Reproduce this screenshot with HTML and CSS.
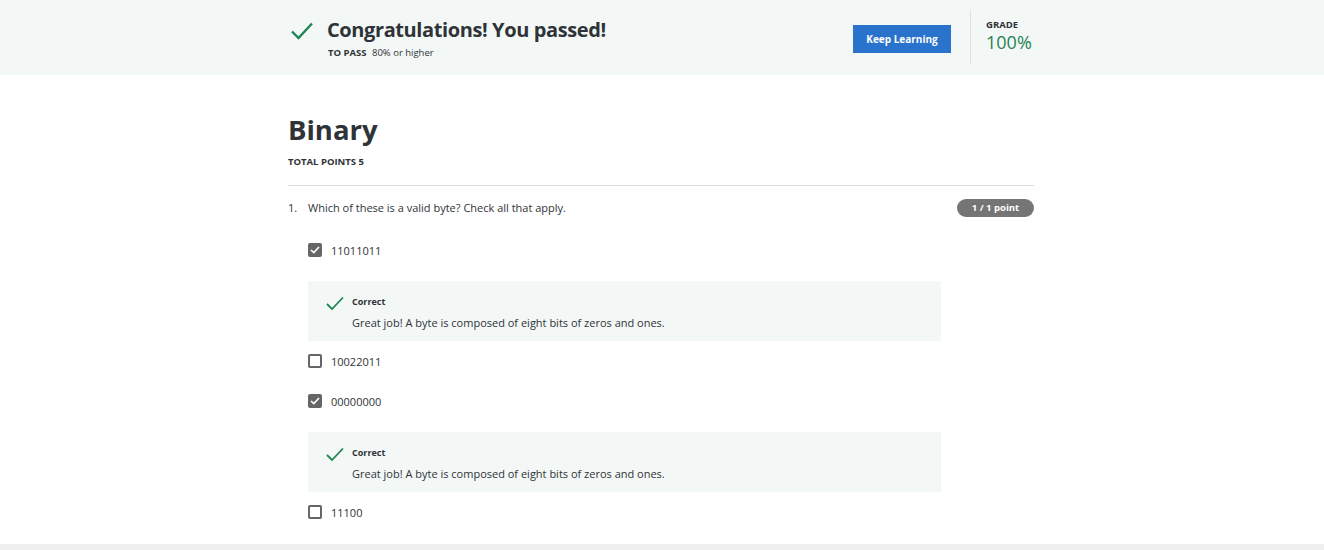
FILE: index.html
```html
<!DOCTYPE html>
<html>
<head>
<meta charset="utf-8">
<link rel="stylesheet" href="styles.css">
</head>
<body>
<header class="banner">
  <div class="banner-inner">
    <div class="passed">
      <svg class="big-check" width="24" height="20" viewBox="0 0 24 20"><path d="M2 10.5 L8.5 17 L22 2.5" fill="none" stroke="#1f8354" stroke-width="2.4"/></svg>
      <div class="passed-text">
        <h1 class="congrats">Congratulations! You passed!</h1>
        <div class="to-pass"><b>TO PASS</b> 80% or higher</div>
      </div>
    </div>
    <div class="actions">
      <button class="keep">Keep Learning</button>
      <div class="divider"></div>
      <div class="grade">
        <div class="grade-label">GRADE</div>
        <div class="grade-value">100%</div>
      </div>
    </div>
  </div>
</header>
<main class="content">
  <h2 class="quiz-title">Binary</h2>
  <div class="total">TOTAL POINTS 5</div>
  <hr class="rule">
  <div class="question">
    <div class="q-text"><span class="q-num">1.</span>Which of these is a valid byte? Check all that apply.</div>
    <span class="badge">1 / 1 point</span>
  </div>
  <div class="options">
    <div class="opt"><span class="box checked"><svg width="10" height="8" viewBox="0 0 10 8"><path d="M1 4 L3.8 6.6 L9 1" fill="none" stroke="#fff" stroke-width="1.6"/></svg></span>11011011</div>
    <div class="feedback">
      <svg class="fb-check" width="18" height="15" viewBox="0 0 18 15"><path d="M1 8 L6 13 L17 1.5" fill="none" stroke="#1f8354" stroke-width="1.8"/></svg>
      <div>
        <div class="fb-title">Correct</div>
        <div class="fb-text">Great job! A byte is composed of eight bits of zeros and ones.</div>
      </div>
    </div>
    <div class="opt"><span class="box"></span>10022011</div>
    <div class="opt"><span class="box checked"><svg width="10" height="8" viewBox="0 0 10 8"><path d="M1 4 L3.8 6.6 L9 1" fill="none" stroke="#fff" stroke-width="1.6"/></svg></span>00000000</div>
    <div class="feedback">
      <svg class="fb-check" width="18" height="15" viewBox="0 0 18 15"><path d="M1 8 L6 13 L17 1.5" fill="none" stroke="#1f8354" stroke-width="1.8"/></svg>
      <div>
        <div class="fb-title">Correct</div>
        <div class="fb-text">Great job! A byte is composed of eight bits of zeros and ones.</div>
      </div>
    </div>
    <div class="opt"><span class="box"></span>11100</div>
  </div>
</main>
<div class="bottom-bar"></div>
</body>
</html>
```
FILE: styles.css
```css
* { box-sizing: border-box; }
html, body { margin: 0; padding: 0; }
body {
  font-family: "Open Sans", "Liberation Sans", sans-serif;
  color: #2f3337;
  background: #fff;
  height: 550px;
  overflow: hidden;
  display: flex;
  flex-direction: column;
}
.banner {
  background: #f3f8f6;
  height: 75px;
  flex: none;
}
.banner-inner {
  width: 746px;
  margin-left: 288px;
  height: 75px;
  display: flex;
  justify-content: space-between;
}
.passed {
  display: flex;
  align-items: flex-start;
  padding-top: 17px;
}
.big-check { margin-top: 4px; margin-left: 2px; }
.passed-text { margin-left: 13px; }
.congrats {
  margin: 0;
  font-size: 20px;
  font-weight: 700;
  line-height: 26px;
  letter-spacing: -0.4px;
}
.to-pass {
  font-size: 9.5px;
  line-height: 13px;
  margin-top: 3px;
  margin-left: 1px;
}
.to-pass b { margin-right: 3px; }
.actions {
  display: flex;
  align-items: flex-start;
}
.keep {
  margin-top: 25px;
  width: 98px;
  height: 28px;
  border: none;
  background: #2a73cc;
  color: #fff;
  font-family: inherit;
  font-weight: 700;
  font-size: 10px;
  padding: 0;
}
.divider {
  width: 1px;
  height: 54px;
  margin-top: 10px;
  margin-left: 19px;
  background: #dde3e0;
}
.grade {
  margin-left: 15px;
  padding-top: 18px;
  width: 48px;
}
.grade-label {
  font-size: 9.5px;
  font-weight: 700;
  line-height: 13px;
}
.grade-value {
  font-size: 18px;
  color: #1f8354;
  line-height: 22px;
}
.content {
  width: 746px;
  margin-left: 288px;
  flex: 1;
}
.quiz-title {
  margin: 0;
  padding-top: 37px;
  font-size: 27.5px;
  font-weight: 700;
  line-height: 36px;
}
.total {
  font-size: 9.5px;
  font-weight: 700;
  margin-top: 8px;
  line-height: 12px;
}
.rule {
  border: none;
  border-top: 1px solid #dcdcdc;
  margin: 17px 0 0 0;
}
.question {
  display: flex;
  justify-content: space-between;
  align-items: center;
  margin-top: 13px;
}
.q-text {
  font-size: 11px;
  line-height: 16px;
}
.q-num { display: inline-block; width: 20px; }
.badge {
  background: #757575;
  color: #fff;
  font-size: 9.5px;
  font-weight: 700;
  border-radius: 10px;
  width: 77px;
  height: 18px;
  line-height: 18px;
  text-align: center;
}
.options {
  margin-left: 20px;
  margin-top: 13px;
  width: 633px;
}
.opt {
  display: flex;
  align-items: center;
  height: 40px;
  font-size: 11px;
}
.box {
  width: 14px;
  height: 14px;
  border: 2px solid #666;
  border-radius: 2px;
  margin-right: 9px;
  display: flex;
  align-items: center;
  justify-content: center;
  flex: none;
}
.box.checked { background: #666; }
.feedback {
  background: #f3f8f6;
  height: 60px;
  margin: 11px 0 0 0;
  display: flex;
  align-items: flex-start;
  padding: 15px 0 0 18px;
}
.fb-check { margin-top: 0; flex: none; }
.feedback > div { margin-left: 8px; }
.fb-title {
  font-size: 9px;
  font-weight: 700;
  line-height: 12px;
}
.fb-text {
  font-size: 11px;
  line-height: 15px;
  margin-top: 7px;
}
.bottom-bar {
  height: 6px;
  background: #efefef;
  flex: none;
}
```
